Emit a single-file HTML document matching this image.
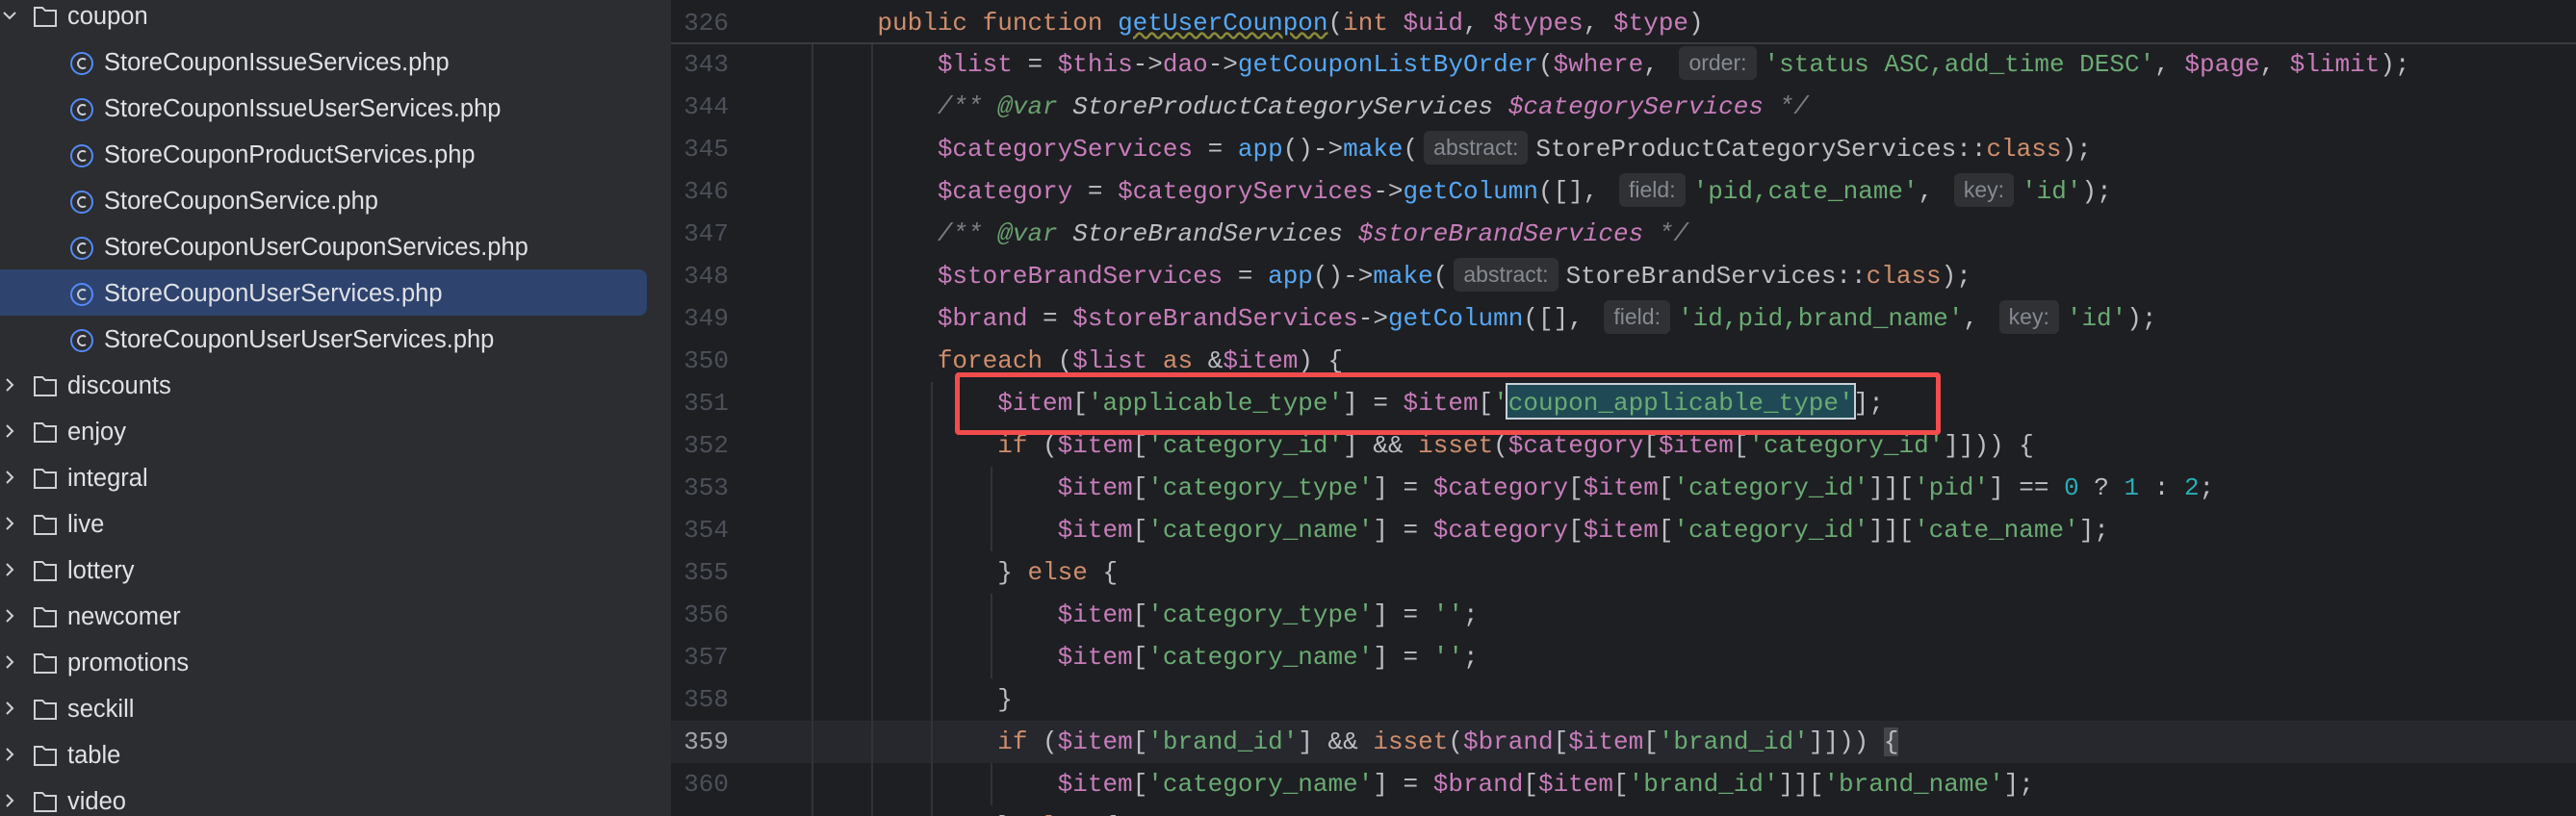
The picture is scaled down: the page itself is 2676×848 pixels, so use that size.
<!DOCTYPE html>
<html style="width:2676px;height:848px;overflow:hidden"><head><meta charset="utf-8"><style>
html,body{margin:0;padding:0;}
body{width:2676px;height:848px;overflow:hidden;background:#1e1f22;position:relative;font-family:"Liberation Sans",sans-serif;}
#wrap{position:absolute;left:0;top:0;width:2676px;height:848px;overflow:hidden;}
#side{position:absolute;left:0;top:0;width:697px;height:848px;background:#2b2d30;}
.row{position:absolute;left:0;height:48px;line-height:48px;font-size:25.5px;color:#dfe1e5;white-space:nowrap;}
.sel{position:absolute;left:0;top:280px;width:672px;height:48px;background:#2e436e;border-radius:0 8px 8px 0;}
.fi{position:absolute;left:72px;top:12px;}
.ft{position:absolute;left:108px;top:0;}
.fo{position:absolute;left:34px;top:12px;}
.fot{position:absolute;left:70px;top:0;}
.chev{position:absolute;left:2px;top:16px;}
#ed{position:absolute;left:697px;top:0;right:0;height:848px;background:#1e1f22;}
.ln{position:absolute;left:697px;width:60px;text-align:right;font-family:"Liberation Mono",monospace;font-size:26px;color:#4b5059;height:44px;line-height:44px;}
.code{position:absolute;left:849px;height:44px;line-height:44px;font-family:"Liberation Mono",monospace;font-size:26px;color:#bcbec4;white-space:pre;}
.k{color:#cf8e6d}.f{color:#56a8f5}.v{color:#c77dbb}.s{color:#6aab73}.n{color:#2aacb8}
.c{color:#7a7e85;font-style:italic}.cv{color:#c77dbb;font-style:italic}.ct{color:#bcbec4;font-style:italic}.ca{color:#6a9f6f;font-style:italic}
.h{display:inline-block;font-family:"Liberation Sans",sans-serif;font-size:23px;color:#868a91;background:#2f3135;border-radius:6px;padding:0 10px;line-height:35px;height:35px;vertical-align:middle;margin:0 8px 0 6px;position:relative;top:-2px;}
.g{position:absolute;width:2px;background:#313338;}
</style></head><body><div id="wrap">
<div id="side">
  <div class="sel"></div>
  <div class="row" style="top:-7px;width:697px">
    <svg class="chev" width="16" height="14" viewBox="0 0 16 14"><path d="M2 4 L8 10 L14 4" stroke="#ced0d6" stroke-width="2" fill="none"/></svg>
    <svg class="fo" width="26" height="24" viewBox="0 0 26 24"><path d="M2 3 H10 L13 6 H24 V22 H2 Z" stroke="#ced0d6" stroke-width="2" fill="none"/></svg>
    <span class="fot">coupon</span></div>
  <div class="row" style="top:41px;width:697px"><svg class="fi" width="26" height="26" viewBox="0 0 26 26"><circle cx="13" cy="13" r="11" stroke="#548af7" stroke-width="2" fill="none"/><path d="M17 9 A5 5 0 1 0 17 17" stroke="#ced0d6" stroke-width="2" fill="none"/></svg><span class="ft">StoreCouponIssueServices.php</span></div>
  <div class="row" style="top:89px;width:697px"><svg class="fi" width="26" height="26" viewBox="0 0 26 26"><circle cx="13" cy="13" r="11" stroke="#548af7" stroke-width="2" fill="none"/><path d="M17 9 A5 5 0 1 0 17 17" stroke="#ced0d6" stroke-width="2" fill="none"/></svg><span class="ft">StoreCouponIssueUserServices.php</span></div>
  <div class="row" style="top:137px;width:697px"><svg class="fi" width="26" height="26" viewBox="0 0 26 26"><circle cx="13" cy="13" r="11" stroke="#548af7" stroke-width="2" fill="none"/><path d="M17 9 A5 5 0 1 0 17 17" stroke="#ced0d6" stroke-width="2" fill="none"/></svg><span class="ft">StoreCouponProductServices.php</span></div>
  <div class="row" style="top:185px;width:697px"><svg class="fi" width="26" height="26" viewBox="0 0 26 26"><circle cx="13" cy="13" r="11" stroke="#548af7" stroke-width="2" fill="none"/><path d="M17 9 A5 5 0 1 0 17 17" stroke="#ced0d6" stroke-width="2" fill="none"/></svg><span class="ft">StoreCouponService.php</span></div>
  <div class="row" style="top:233px;width:697px"><svg class="fi" width="26" height="26" viewBox="0 0 26 26"><circle cx="13" cy="13" r="11" stroke="#548af7" stroke-width="2" fill="none"/><path d="M17 9 A5 5 0 1 0 17 17" stroke="#ced0d6" stroke-width="2" fill="none"/></svg><span class="ft">StoreCouponUserCouponServices.php</span></div>
  <div class="row" style="top:281px;width:697px"><svg class="fi" width="26" height="26" viewBox="0 0 26 26"><circle cx="13" cy="13" r="11" stroke="#548af7" stroke-width="2" fill="none"/><path d="M17 9 A5 5 0 1 0 17 17" stroke="#ced0d6" stroke-width="2" fill="none"/></svg><span class="ft">StoreCouponUserServices.php</span></div>
  <div class="row" style="top:329px;width:697px"><svg class="fi" width="26" height="26" viewBox="0 0 26 26"><circle cx="13" cy="13" r="11" stroke="#548af7" stroke-width="2" fill="none"/><path d="M17 9 A5 5 0 1 0 17 17" stroke="#ced0d6" stroke-width="2" fill="none"/></svg><span class="ft">StoreCouponUserUserServices.php</span></div>
  <div class="row" style="top:377px;width:697px"><svg class="chev" width="16" height="14" viewBox="0 0 16 14"><path d="M5 1 L11 7 L5 13" stroke="#ced0d6" stroke-width="2" fill="none"/></svg><svg class="fo" width="26" height="24" viewBox="0 0 26 24"><path d="M2 3 H10 L13 6 H24 V22 H2 Z" stroke="#ced0d6" stroke-width="2" fill="none"/></svg><span class="fot">discounts</span></div>
  <div class="row" style="top:425px;width:697px"><svg class="chev" width="16" height="14" viewBox="0 0 16 14"><path d="M5 1 L11 7 L5 13" stroke="#ced0d6" stroke-width="2" fill="none"/></svg><svg class="fo" width="26" height="24" viewBox="0 0 26 24"><path d="M2 3 H10 L13 6 H24 V22 H2 Z" stroke="#ced0d6" stroke-width="2" fill="none"/></svg><span class="fot">enjoy</span></div>
  <div class="row" style="top:473px;width:697px"><svg class="chev" width="16" height="14" viewBox="0 0 16 14"><path d="M5 1 L11 7 L5 13" stroke="#ced0d6" stroke-width="2" fill="none"/></svg><svg class="fo" width="26" height="24" viewBox="0 0 26 24"><path d="M2 3 H10 L13 6 H24 V22 H2 Z" stroke="#ced0d6" stroke-width="2" fill="none"/></svg><span class="fot">integral</span></div>
  <div class="row" style="top:521px;width:697px"><svg class="chev" width="16" height="14" viewBox="0 0 16 14"><path d="M5 1 L11 7 L5 13" stroke="#ced0d6" stroke-width="2" fill="none"/></svg><svg class="fo" width="26" height="24" viewBox="0 0 26 24"><path d="M2 3 H10 L13 6 H24 V22 H2 Z" stroke="#ced0d6" stroke-width="2" fill="none"/></svg><span class="fot">live</span></div>
  <div class="row" style="top:569px;width:697px"><svg class="chev" width="16" height="14" viewBox="0 0 16 14"><path d="M5 1 L11 7 L5 13" stroke="#ced0d6" stroke-width="2" fill="none"/></svg><svg class="fo" width="26" height="24" viewBox="0 0 26 24"><path d="M2 3 H10 L13 6 H24 V22 H2 Z" stroke="#ced0d6" stroke-width="2" fill="none"/></svg><span class="fot">lottery</span></div>
  <div class="row" style="top:617px;width:697px"><svg class="chev" width="16" height="14" viewBox="0 0 16 14"><path d="M5 1 L11 7 L5 13" stroke="#ced0d6" stroke-width="2" fill="none"/></svg><svg class="fo" width="26" height="24" viewBox="0 0 26 24"><path d="M2 3 H10 L13 6 H24 V22 H2 Z" stroke="#ced0d6" stroke-width="2" fill="none"/></svg><span class="fot">newcomer</span></div>
  <div class="row" style="top:665px;width:697px"><svg class="chev" width="16" height="14" viewBox="0 0 16 14"><path d="M5 1 L11 7 L5 13" stroke="#ced0d6" stroke-width="2" fill="none"/></svg><svg class="fo" width="26" height="24" viewBox="0 0 26 24"><path d="M2 3 H10 L13 6 H24 V22 H2 Z" stroke="#ced0d6" stroke-width="2" fill="none"/></svg><span class="fot">promotions</span></div>
  <div class="row" style="top:713px;width:697px"><svg class="chev" width="16" height="14" viewBox="0 0 16 14"><path d="M5 1 L11 7 L5 13" stroke="#ced0d6" stroke-width="2" fill="none"/></svg><svg class="fo" width="26" height="24" viewBox="0 0 26 24"><path d="M2 3 H10 L13 6 H24 V22 H2 Z" stroke="#ced0d6" stroke-width="2" fill="none"/></svg><span class="fot">seckill</span></div>
  <div class="row" style="top:761px;width:697px"><svg class="chev" width="16" height="14" viewBox="0 0 16 14"><path d="M5 1 L11 7 L5 13" stroke="#ced0d6" stroke-width="2" fill="none"/></svg><svg class="fo" width="26" height="24" viewBox="0 0 26 24"><path d="M2 3 H10 L13 6 H24 V22 H2 Z" stroke="#ced0d6" stroke-width="2" fill="none"/></svg><span class="fot">table</span></div>
  <div class="row" style="top:809px;width:697px"><svg class="chev" width="16" height="14" viewBox="0 0 16 14"><path d="M5 1 L11 7 L5 13" stroke="#ced0d6" stroke-width="2" fill="none"/></svg><svg class="fo" width="26" height="24" viewBox="0 0 26 24"><path d="M2 3 H10 L13 6 H24 V22 H2 Z" stroke="#ced0d6" stroke-width="2" fill="none"/></svg><span class="fot">video</span></div>
</div>
<div id="ed"></div>
<div style="position:absolute;left:697px;right:0;top:749px;height:44px;background:#26282e"></div>
<div style="position:absolute;left:697px;right:0;top:44px;height:2px;background:#393b40"></div>
<div class="g" style="left:843px;top:46px;height:802px"></div>
<div class="g" style="left:905px;top:46px;height:802px"></div>
<div class="g" style="left:967px;top:397px;height:451px"></div>
<div class="g" style="left:1029px;top:485px;height:88px"></div>
<div class="g" style="left:1029px;top:617px;height:88px"></div>
<div class="g" style="left:1029px;top:793px;height:44px"></div>

<div class="ln" style="top:2px">326</div>
<div class="code" style="top:2px">    <span class="k">public function </span><span class="f" style="text-decoration:underline wavy #8a8a3a">getUserCounpon</span>(<span class="k">int </span><span class="v">$uid</span>, <span class="v">$types</span>, <span class="v">$type</span>)</div>

<div class="ln" style="top:45px">343</div>
<div class="code" style="top:45px">        <span class="v">$list</span> = <span class="v">$this</span>-&gt;<span class="v">dao</span>-&gt;<span class="f">getCouponListByOrder</span>(<span class="v">$where</span>, <span class="h">order:</span><span class="s">'status ASC,add_time DESC'</span>, <span class="v">$page</span>, <span class="v">$limit</span>);</div>
<div class="ln" style="top:89px">344</div>
<div class="code" style="top:89px">        <span class="c">/** </span><span class="ca">@var</span><span class="ct"> StoreProductCategoryServices </span><span class="cv">$categoryServices</span><span class="c"> */</span></div>
<div class="ln" style="top:133px">345</div>
<div class="code" style="top:133px">        <span class="v">$categoryServices</span> = <span class="f">app</span>()-&gt;<span class="f">make</span>(<span class="h">abstract:</span>StoreProductCategoryServices::<span class="k">class</span>);</div>
<div class="ln" style="top:177px">346</div>
<div class="code" style="top:177px">        <span class="v">$category</span> = <span class="v">$categoryServices</span>-&gt;<span class="f">getColumn</span>([], <span class="h">field:</span><span class="s">'pid,cate_name'</span>, <span class="h">key:</span><span class="s">'id'</span>);</div>
<div class="ln" style="top:221px">347</div>
<div class="code" style="top:221px">        <span class="c">/** </span><span class="ca">@var</span><span class="ct"> StoreBrandServices </span><span class="cv">$storeBrandServices</span><span class="c"> */</span></div>
<div class="ln" style="top:265px">348</div>
<div class="code" style="top:265px">        <span class="v">$storeBrandServices</span> = <span class="f">app</span>()-&gt;<span class="f">make</span>(<span class="h">abstract:</span>StoreBrandServices::<span class="k">class</span>);</div>
<div class="ln" style="top:309px">349</div>
<div class="code" style="top:309px">        <span class="v">$brand</span> = <span class="v">$storeBrandServices</span>-&gt;<span class="f">getColumn</span>([], <span class="h">field:</span><span class="s">'id,pid,brand_name'</span>, <span class="h">key:</span><span class="s">'id'</span>);</div>
<div class="ln" style="top:353px">350</div>
<div class="code" style="top:353px">        <span class="k">foreach</span> (<span class="v">$list</span> <span class="k">as</span> &amp;<span class="v">$item</span>) {</div>
<div style="position:absolute;left:1564px;top:398px;width:364px;height:38px;background:#1f4a55;border:2px solid #c8d0d8;box-sizing:border-box"></div>
<div class="ln" style="top:397px">351</div>
<div class="code" style="top:397px">            <span class="v">$item</span>[<span class="s">'applicable_type'</span>] = <span class="v">$item</span>[<span class="s">'coupon_applicable_type'</span>];</div>
<div class="ln" style="top:441px">352</div>
<div class="code" style="top:441px">            <span class="k">if</span> (<span class="v">$item</span>[<span class="s">'category_id'</span>] &amp;&amp; <span class="k">isset</span>(<span class="v">$category</span>[<span class="v">$item</span>[<span class="s">'category_id'</span>]])) {</div>
<div class="ln" style="top:485px">353</div>
<div class="code" style="top:485px">                <span class="v">$item</span>[<span class="s">'category_type'</span>] = <span class="v">$category</span>[<span class="v">$item</span>[<span class="s">'category_id'</span>]][<span class="s">'pid'</span>] == <span class="n">0</span> ? <span class="n">1</span> : <span class="n">2</span>;</div>
<div class="ln" style="top:529px">354</div>
<div class="code" style="top:529px">                <span class="v">$item</span>[<span class="s">'category_name'</span>] = <span class="v">$category</span>[<span class="v">$item</span>[<span class="s">'category_id'</span>]][<span class="s">'cate_name'</span>];</div>
<div class="ln" style="top:573px">355</div>
<div class="code" style="top:573px">            } <span class="k">else</span> {</div>
<div class="ln" style="top:617px">356</div>
<div class="code" style="top:617px">                <span class="v">$item</span>[<span class="s">'category_type'</span>] = <span class="s">''</span>;</div>
<div class="ln" style="top:661px">357</div>
<div class="code" style="top:661px">                <span class="v">$item</span>[<span class="s">'category_name'</span>] = <span class="s">''</span>;</div>
<div class="ln" style="top:705px">358</div>
<div class="code" style="top:705px">            }</div>
<div class="ln" style="top:749px;color:#a1a3ab">359</div>
<div class="code" style="top:749px">            <span class="k">if</span> (<span class="v">$item</span>[<span class="s">'brand_id'</span>] &amp;&amp; <span class="k">isset</span>(<span class="v">$brand</span>[<span class="v">$item</span>[<span class="s">'brand_id'</span>]])) <span style="background:#43454a">{</span></div>
<div class="ln" style="top:793px">360</div>
<div class="code" style="top:793px">                <span class="v">$item</span>[<span class="s">'category_name'</span>] = <span class="v">$brand</span>[<span class="v">$item</span>[<span class="s">'brand_id'</span>]][<span class="s">'brand_name'</span>];</div>
<div class="ln" style="top:837px">361</div>
<div class="code" style="top:837px">            } <span class="k">else</span> {</div>
<div style="position:absolute;left:992px;top:387px;width:1024px;height:65px;border:5px solid #f24c4c;border-radius:4px;box-sizing:border-box"></div>
</div></body></html>
